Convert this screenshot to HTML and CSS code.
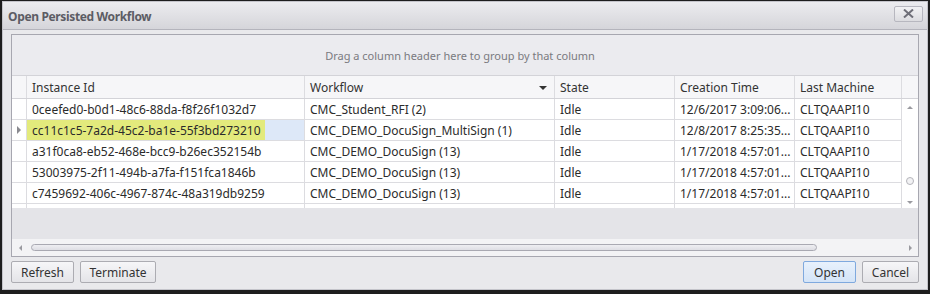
FILE: index.html
```html
<!DOCTYPE html>
<html lang="en">
<head>
    <meta charset="UTF-8">
    <title>Open Persisted Workflow</title>
    <link rel="stylesheet" href="styles.css">
</head>
<body>
    <div class="window">
        <!-- Title bar -->
        <div class="titlebar">
            <span class="title">Open Persisted Workflow</span>
            <button class="close-btn">
                <svg width="11" height="9" viewBox="0 0 11 9"><path d="M1 0.5 L10 8.5 M10 0.5 L1 8.5" stroke="#6f6f78" stroke-width="2"/></svg>
            </button>
        </div>

        <div class="content">
            <!-- Grid -->
            <div class="grid">
                <div class="group-panel">Drag a column header here to group by that column</div>

                <div class="row header">
                    <div class="cell ind"></div>
                    <div class="cell">Instance Id</div>
                    <div class="cell wf">Workflow <span class="sort"></span></div>
                    <div class="cell">State</div>
                    <div class="cell">Creation Time</div>
                    <div class="cell">Last Machine</div>
                    <div class="cell vs"></div>
                </div>

                <div class="body">
                    <div class="rows">
                        <div class="row">
                            <div class="cell ind"></div>
                            <div class="cell">0ceefed0-b0d1-48c6-88da-f8f26f1032d7</div>
                            <div class="cell">CMC_Student_RFI (2)</div>
                            <div class="cell">Idle</div>
                            <div class="cell">12/6/2017 3:09:06...</div>
                            <div class="cell">CLTQAAPI10</div>
                        </div>
                        <div class="row current">
                            <div class="cell ind"><span class="arrow"></span></div>
                            <div class="cell sel"><span class="mark">cc11c1c5-7a2d-45c2-ba1e-55f3bd273210</span></div>
                            <div class="cell">CMC_DEMO_DocuSign_MultiSign (1)</div>
                            <div class="cell">Idle</div>
                            <div class="cell">12/8/2017 8:25:35...</div>
                            <div class="cell">CLTQAAPI10</div>
                        </div>
                        <div class="row">
                            <div class="cell ind"></div>
                            <div class="cell">a31f0ca8-eb52-468e-bcc9-b26ec352154b</div>
                            <div class="cell">CMC_DEMO_DocuSign (13)</div>
                            <div class="cell">Idle</div>
                            <div class="cell">1/17/2018 4:57:01...</div>
                            <div class="cell">CLTQAAPI10</div>
                        </div>
                        <div class="row">
                            <div class="cell ind"></div>
                            <div class="cell">53003975-2f11-494b-a7fa-f151fca1846b</div>
                            <div class="cell">CMC_DEMO_DocuSign (13)</div>
                            <div class="cell">Idle</div>
                            <div class="cell">1/17/2018 4:57:01...</div>
                            <div class="cell">CLTQAAPI10</div>
                        </div>
                        <div class="row">
                            <div class="cell ind"></div>
                            <div class="cell">c7459692-406c-4967-874c-48a319db9259</div>
                            <div class="cell">CMC_DEMO_DocuSign (13)</div>
                            <div class="cell">Idle</div>
                            <div class="cell">1/17/2018 4:57:01...</div>
                            <div class="cell">CLTQAAPI10</div>
                        </div>
                        <div class="row partial">
                            <div class="cell ind"></div>
                            <div class="cell"></div>
                            <div class="cell"></div>
                            <div class="cell"></div>
                            <div class="cell"></div>
                            <div class="cell"></div>
                        </div>
                    </div>
                    <!-- Vertical scrollbar -->
                    <div class="vscroll">
                        <span class="tri up"></span>
                        <span class="thumb-dot"></span>
                        <span class="tri down"></span>
                    </div>
                </div>

                <div class="empty"></div>

                <!-- Horizontal scrollbar -->
                <div class="hscroll">
                    <span class="tri left"></span>
                    <div class="track"><div class="hthumb"></div></div>
                    <span class="tri right"></span>
                </div>
            </div>

            <!-- Buttons -->
            <div class="footer">
                <div class="left-btns">
                    <button class="btn btn-refresh">Refresh</button>
                    <button class="btn btn-terminate">Terminate</button>
                </div>
                <div class="right-btns">
                    <button class="btn btn-open primary">Open</button>
                    <button class="btn btn-cancel">Cancel</button>
                </div>
            </div>
        </div>
    </div>
</body>
</html>
```

FILE: styles.css
```css
* {
    margin: 0;
    padding: 0;
    box-sizing: border-box;
}

body {
    font-family: 'Noto Sans', 'Open Sans', sans-serif;
    font-size: 12px;
    color: #2b2b2b;
    background-color: #1e1e1e;
    width: 930px;
    height: 294px;
    overflow: hidden;
}

.window {
    margin: 1px 2px 0 2px;
    height: 289px;
    background-color: #e9e9ec;
    border: 1px solid #c4c4ca;
}

.titlebar {
    height: 28px;
    display: flex;
    align-items: center;
    justify-content: space-between;
    padding: 0 4px 0 5px;
    background: linear-gradient(#ececef, #d5d5da);
    border-bottom: 1px solid #b4b4bc;
}

.title {
    font-weight: bold;
    font-size: 12px;
    letter-spacing: -0.35px;
    color: #5c5c64;
    margin-top: 2px;
}

.close-btn {
    width: 29px;
    height: 16px;
    margin-top: -4px;
    border: 1px solid #b7b7bf;
    border-radius: 2px;
    background: linear-gradient(#f2f2f4, #dcdce0);
    display: flex;
    align-items: center;
    justify-content: center;
}

.content {
    padding: 4px 8px 0 8px;
}

.grid {
    border: 1px solid #a7a7b0;
    background-color: #ffffff;
    height: 223px;
    display: flex;
    flex-direction: column;
}

.group-panel {
    height: 41px;
    background-color: #ebebef;
    border-bottom: 1px solid #d3d3d8;
    color: #7a7a80;
    font-size: 11px;
    display: flex;
    align-items: center;
    justify-content: center;
    padding-right: 10px;
}

.row {
    display: grid;
    grid-template-columns: 15px 278px 250px 120px 120px 107px;
    height: 21px;
    border-bottom: 1px solid #dcdce0;
}

.row.header {
    grid-template-columns: 15px 278px 250px 120px 120px 107px 16px;
    height: 23px;
    background-color: #f6f6f8;
    border-bottom: 1px solid #d3d3d8;
}

.cell {
    border-right: 1px solid #dcdce0;
    padding-left: 5px;
    display: flex;
    align-items: center;
    white-space: nowrap;
    overflow: hidden;
}

.cell.vs {
    border-right: none;
}

.header .cell {
    color: #333;
    padding-top: 1px;
}

.wf {
    justify-content: space-between;
    padding-right: 7px;
}

.sort {
    width: 0;
    height: 0;
    border-left: 4px solid transparent;
    border-right: 4px solid transparent;
    border-top: 4px solid #333;
}

.body {
    display: flex;
}

.rows {
    width: 890px;
}

.row.partial {
    height: 4px;
    border-bottom: none;
}

.current .sel {
    background-color: #dde8f8;
    padding-left: 0;
}

.mark {
    background-color: #e3ea7c;
    height: 100%;
    display: flex;
    align-items: center;
    padding: 0 4px 0 5px;
}

.arrow {
    width: 0;
    height: 0;
    border-top: 4px solid transparent;
    border-bottom: 4px solid transparent;
    border-left: 4px solid #8a8a90;
}

.vscroll {
    width: 16px;
    display: flex;
    flex-direction: column;
    align-items: center;
    justify-content: space-between;
    padding: 7px 0 4px;
}

.tri {
    width: 0;
    height: 0;
}

.tri.up {
    border-left: 3px solid transparent;
    border-right: 3px solid transparent;
    border-bottom: 3px solid #9a9aa0;
}

.tri.down {
    border-left: 3px solid transparent;
    border-right: 3px solid transparent;
    border-top: 3px solid #9a9aa0;
}

.tri.left {
    border-top: 3px solid transparent;
    border-bottom: 3px solid transparent;
    border-right: 3px solid #9a9aa0;
}

.tri.right {
    border-top: 3px solid transparent;
    border-bottom: 3px solid transparent;
    border-left: 3px solid #9a9aa0;
}

.thumb-dot {
    width: 8px;
    height: 8px;
    border: 1px solid #b4b4ba;
    border-radius: 50%;
    background-color: #f2f2f4;
    margin-top: 52px;
}

.empty {
    flex: 1;
    background-color: #e4e4e8;
}

.hscroll {
    height: 17px;
    background-color: #f3f3f5;
    display: flex;
    align-items: center;
    padding: 0 6px 0 7px;
    gap: 9px;
}

.track {
    flex: 1;
}

.hthumb {
    width: 786px;
    height: 7px;
    border: 1px solid #a9a9b2;
    border-radius: 4px;
    background: linear-gradient(#eeeef2, #dedee4);
}

.footer {
    display: flex;
    justify-content: space-between;
    padding-top: 4px;
}

.left-btns, .right-btns {
    display: flex;
    gap: 6px;
}

.btn {
    height: 22px;
    font-family: 'Noto Sans', 'Open Sans', sans-serif;
    font-size: 12px;
    color: #333;
    border: 1px solid #acacb2;
    border-radius: 2px;
    background: linear-gradient(#f6f6f8, #e4e4e8);
    cursor: pointer;
}

.btn-refresh { width: 63px; }
.btn-terminate { width: 76px; }
.btn-open { width: 53px; }
.btn-cancel { width: 57px; }

.btn.primary {
    border-color: #7fa9de;
    background: linear-gradient(#e8f1fc, #d4e4f7);
}
```
